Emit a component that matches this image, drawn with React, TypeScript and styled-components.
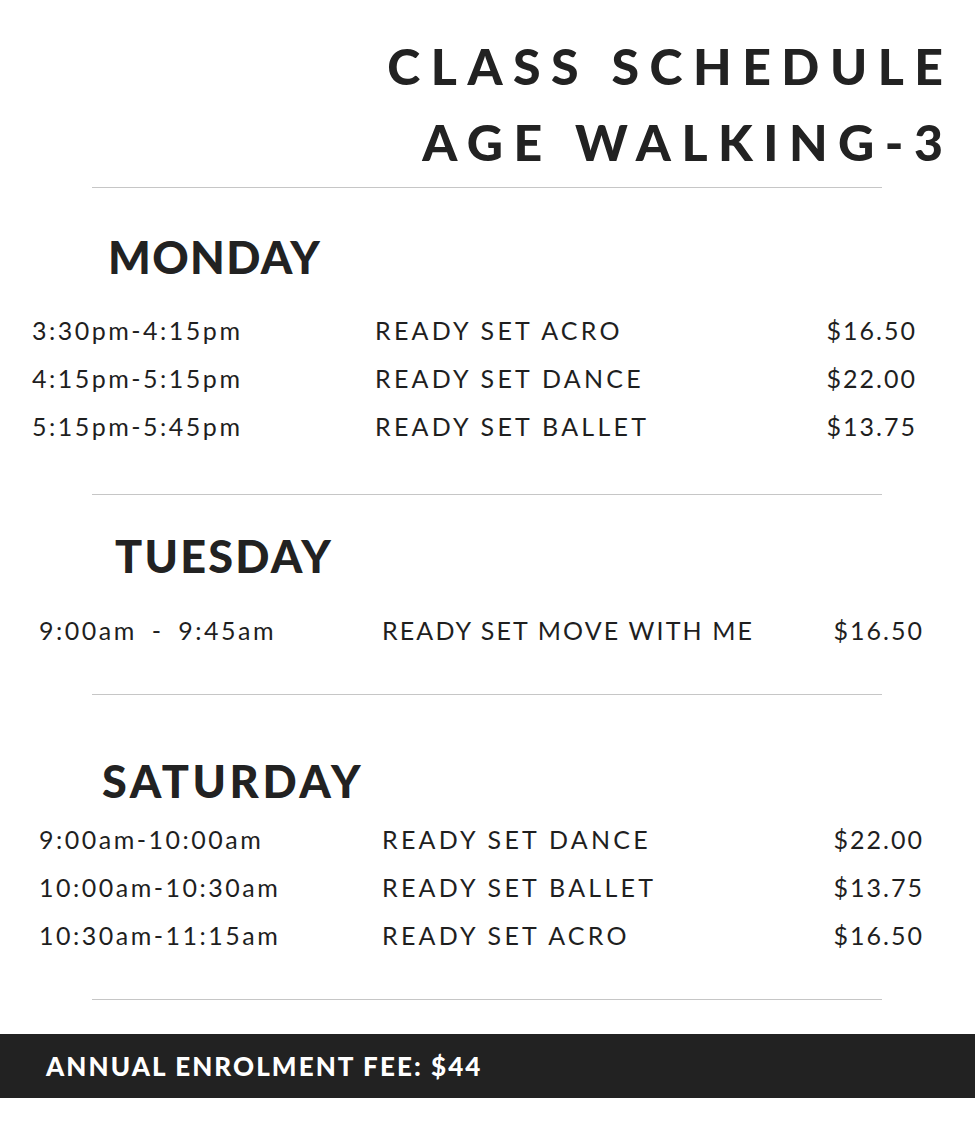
import styled, { createGlobalStyle } from 'styled-components';

const GlobalStyle = createGlobalStyle`
  html, body {
    margin: 0;
    padding: 0;
    background: #ffffff;
  }
  body {
    font-family: 'Lato', 'Open Sans', sans-serif;
    color: #222222;
  }
`;

interface ClassRow {
  time: string;
  name: string;
  price: string;
}

interface DaySchedule {
  day: string;
  dayIndent: number;
  daySpacing: number;
  nameSpacing: number;
  rowIndent: number;
  headTop: number;
  rowsTop: number;
  bottom: number;
  rows: ClassRow[];
}

const SCHEDULE: DaySchedule[] = [
  {
    day: 'MONDAY',
    dayIndent: 108,
    daySpacing: 0.03,
    nameSpacing: 0.13,
    rowIndent: 32,
    headTop: 41,
    rowsTop: 21,
    bottom: 44,
    rows: [
      { time: '3:30pm-4:15pm', name: 'READY SET ACRO', price: '$16.50' },
      { time: '4:15pm-5:15pm', name: 'READY SET DANCE', price: '$22.00' },
      { time: '5:15pm-5:45pm', name: 'READY SET BALLET', price: '$13.75' },
    ],
  },
  {
    day: 'TUESDAY',
    dayIndent: 115,
    daySpacing: 0.05,
    nameSpacing: 0.085,
    rowIndent: 39,
    headTop: 33,
    rowsTop: 22,
    bottom: 40,
    rows: [
      { time: '9:00am - 9:45am', name: 'READY SET MOVE WITH ME', price: '$16.50' },
    ],
  },
  {
    day: 'SATURDAY',
    dayIndent: 102,
    daySpacing: 0.08,
    nameSpacing: 0.13,
    rowIndent: 39,
    headTop: 58,
    rowsTop: 6,
    bottom: 40,
    rows: [
      { time: '9:00am-10:00am', name: 'READY SET DANCE', price: '$22.00' },
      { time: '10:00am-10:30am', name: 'READY SET BALLET', price: '$13.75' },
      { time: '10:30am-11:15am', name: 'READY SET ACRO', price: '$16.50' },
    ],
  },
];

const App = () => {
  return (
    <Page>
      <GlobalStyle />
      <Header>
        <TitleLine>CLASS SCHEDULE</TitleLine>
        <TitleLine>AGE WALKING-3</TitleLine>
      </Header>
      <Divider />
      {SCHEDULE.map((section) => (
        <div key={section.day}>
          <Section $top={section.headTop} $bottom={section.bottom}>
            <DayTitle $indent={section.dayIndent} $spacing={section.daySpacing}>
              {section.day}
            </DayTitle>
            <Rows $top={section.rowsTop} $indent={section.rowIndent}>
              {section.rows.map((row) => (
                <Row key={row.time}>
                  <Time>{row.time}</Time>
                  <ClassName $spacing={section.nameSpacing}>{row.name}</ClassName>
                  <Price>{row.price}</Price>
                </Row>
              ))}
            </Rows>
          </Section>
          <Divider />
        </div>
      ))}
      <FeeBar>
        <FeeText>ANNUAL ENROLMENT FEE: $44</FeeText>
      </FeeBar>
    </Page>
  );
};

export default App;

const Page = styled.div`
  width: 975px;
  min-height: 1143px;
  background: #ffffff;
  overflow: hidden;
`;

const Header = styled.header`
  display: flex;
  flex-direction: column;
  align-items: flex-end;
  padding: 28px 32px 7px 0;
`;

const TitleLine = styled.h1`
  margin: 0 -0.21em 0 0;
  font-family: 'Lato', sans-serif;
  font-weight: 900;
  font-size: 50px;
  line-height: 76px;
  letter-spacing: 0.21em;
  color: #222222;
`;

const Divider = styled.hr`
  margin: 0 93px 0 92px;
  border: none;
  height: 1px;
  background: #c6c6c6;
`;

const Section = styled.section<{ $top: number; $bottom: number }>`
  padding-top: ${({ $top }) => $top}px;
  padding-bottom: ${({ $bottom }) => $bottom}px;
`;

const DayTitle = styled.h2<{ $indent: number; $spacing: number }>`
  margin: 0;
  padding-left: ${({ $indent }) => $indent}px;
  font-family: 'Lato', sans-serif;
  font-weight: 900;
  font-size: 45px;
  line-height: 56px;
  letter-spacing: ${({ $spacing }) => $spacing}em;
  color: #222222;
`;

const Rows = styled.div<{ $top: number; $indent: number }>`
  display: flex;
  flex-direction: column;
  margin-top: ${({ $top }) => $top}px;
  padding-left: ${({ $indent }) => $indent}px;
  padding-right: ${({ $indent }) => 975 - 915 - ($indent - 32)}px;
`;

const Row = styled.div`
  display: grid;
  grid-template-columns: 343px 1fr auto;
  height: 48px;
  align-items: center;
  font-family: 'Lato', sans-serif;
  font-weight: 400;
  font-size: 25px;
  color: #1f1f1f;
`;

const Time = styled.span`
  letter-spacing: 0.1em;
  word-spacing: 6px;
`;

const ClassName = styled.span<{ $spacing: number }>`
  letter-spacing: ${({ $spacing }) => $spacing}em;
`;

const Price = styled.span`
  text-align: right;
  margin-right: -0.08em;
  letter-spacing: 0.08em;
`;

const FeeBar = styled.footer`
  display: flex;
  align-items: center;
  height: 64px;
  margin-top: 34px;
  padding-left: 46px;
  background: #222222;
`;

const FeeText = styled.span`
  font-family: 'Lato', sans-serif;
  font-weight: 900;
  font-size: 26px;
  letter-spacing: 0.08em;
  color: #ffffff;
`;
